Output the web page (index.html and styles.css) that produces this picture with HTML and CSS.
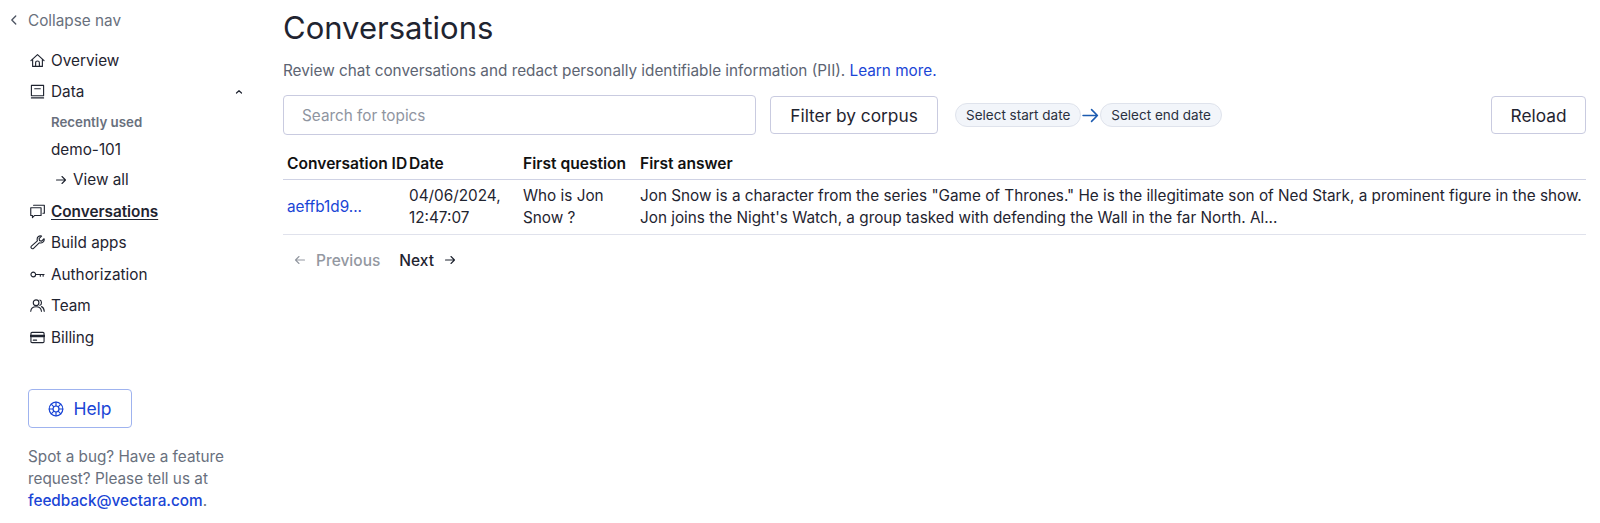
FILE: index.html
```html
<!DOCTYPE html>
<html lang="en">
<head>
<meta charset="utf-8">
<title>Conversations</title>
<link rel="stylesheet" href="styles.css">
</head>
<body>
<div class="app">
  <aside class="sidebar">
    <div class="collapse">
      <svg class="ico-collapse" viewBox="0 0 16 16"><path d="M10 3.500 5.500 8l4.500 4.500"/></svg>
      <span>Collapse nav</span>
    </div>
    <nav class="nav">
      <a class="nav-item"><svg class="ico" viewBox="0 0 16 16"><path d="M1 8.200 8 1.800l7 6.400M2.800 6.800V14.300h10.400V6.800M6 14.300v-3.800a2 2 0 0 1 4 0v3.800"/></svg><span>Overview</span></a>
      <a class="nav-item nav-data"><svg class="ico" viewBox="0 0 16 16"><path d="M1.500 12.500V1.500h13v11zM1.500 14.800h13M5 5h6"/></svg><span class="grow">Data</span><svg class="ico-up" viewBox="0 0 10 10"><path d="M2.500 6 5 3.700 7.500 6"/></svg></a>
      <div class="recent">Recently used</div>
      <div class="corpus">demo-101</div>
      <div class="view-all"><svg class="ico-arrow" viewBox="0 0 12 12"><path d="M1.500 6h9M7 2.500 10.500 6 7 9.500"/></svg><span>View all</span></div>
      <a class="nav-item nav-active"><svg class="ico" viewBox="0 0 16 16"><path d="M.8 4h11v8.200H5L2.600 14.500v-2.300H.8zM3.800 1.300h11.500v8.500h-1.500"/></svg><span>Conversations</span></a>
      <a class="nav-item"><svg class="ico" viewBox="0 0 16 16"><path d="M15 4 12.400 6.500 10.200 6 9.700 3.800 12.300 1.200C10 .4 7.400 2 7.600 4.800c0 .5.100 1 .3 1.400L1.500 11.800c-1.500 1.400.8 3.900 2.300 2.400L9.800 8.300c3 1 6.100-1.300 5.200-4.300z"/></svg><span>Build apps</span></a>
      <a class="nav-item"><svg class="ico" viewBox="0 0 16 16"><circle cx="3.500" cy="8" r="2.500"/><path d="M6 8h9M11 8v1.800M14 8v1.800"/></svg><span>Authorization</span></a>
      <a class="nav-item"><svg class="ico" viewBox="0 0 16 16"><circle cx="6.500" cy="5" r="3"/><path d="M.8 14.200c.6-6.500 10.800-6.500 11.400 0M10.500 2.200c2.300.5 2.300 5 0 5.600M12.300 9.200c1.700.7 2.700 2.700 2.900 5"/></svg><span>Team</span></a>
      <a class="nav-item"><svg class="ico ico-card" viewBox="0 0 16 16"><rect x="1" y="2.500" width="14" height="11" rx="1.200"/><path class="card-band" d="M1 6.300h14"/><path d="M3.500 10.800h3.500"/></svg><span>Billing</span></a>
    </nav>
    <button class="help"><svg class="ico-help" viewBox="0 0 16 16"><circle cx="8" cy="8" r="6.800"/><circle cx="8" cy="8" r="3"/><path d="M3.200 3.200 5.900 5.900M12.800 3.200 10.100 5.900M3.200 12.800 5.900 10.100M12.800 12.800 10.100 10.100M8 1.200V5M8 11v3.800M1.200 8H5M11 8h3.800"/></svg><span>Help</span></button>
    <p class="feedback">Spot a bug? Have a feature request? Please tell us at <a class="link">feedback@vectara.com</a>.</p>
  </aside>
  <main class="main">
    <h1 class="title">Conversations</h1>
    <p class="subtitle">Review chat conversations and redact personally identifiable information (PII). <a class="link-plain">Learn more.</a></p>
    <div class="toolbar">
      <div class="search">Search for topics</div>
      <button class="btn btn-filter">Filter by corpus</button>
      <div class="dates">
        <span class="pill">Select start date</span>
        <svg class="date-arrow" viewBox="0 0 16 16"><path d="M1 8h13.500M9 2.500 14.500 8 9 13.500"/></svg>
        <span class="pill">Select end date</span>
      </div>
      <button class="btn btn-reload">Reload</button>
    </div>
    <table class="table">
      <thead>
        <tr><th class="c-id">Conversation ID</th><th class="c-date">Date</th><th class="c-q">First question</th><th>First answer</th></tr>
      </thead>
      <tbody>
        <tr>
          <td class="c-id"><a class="link-plain">aeffb1d9...</a></td>
          <td class="c-date">04/06/2024, 12:47:07</td>
          <td class="c-q">Who is Jon Snow ?</td>
          <td>Jon Snow is a character from the series "Game of Thrones." He is the illegitimate son of Ned Stark, a prominent figure in the show. Jon joins the Night's Watch, a group tasked with defending the Wall in the far North. Al...</td>
        </tr>
      </tbody>
    </table>
    <div class="pager">
      <span class="page page-off"><svg class="ico-arrow" viewBox="0 0 12 12"><path d="M10.500 6h-9M5 2.500 1.500 6 5 9.500"/></svg><span>Previous</span></span>
      <span class="page"><span>Next</span><svg class="ico-arrow" viewBox="0 0 12 12"><path d="M1.500 6h9M7 2.500 10.500 6 7 9.500"/></svg></span>
    </div>
  </main>
</div>
</body>
</html>
```
FILE: styles.css
```css
* { box-sizing: border-box; }
html, body { margin: 0; padding: 0; background: #fff; }
body { font-family: Inter, "Liberation Sans", sans-serif; color: #1f2430; font-size: 15.300px; }
svg { fill: none; stroke: currentColor; stroke-linecap: round; stroke-linejoin: round; flex: none; display: block; }
.app { display: flex; height: 523px; overflow: hidden; }
.sidebar { width: 283px; flex: none; padding: 10px 0 0 28px; }
.collapse { display: flex; align-items: center; height: 20px; color: #69707d; font-size: 15.300px; margin-left: -21px; gap: 7px; }
.ico-collapse { width: 14px; height: 14px; stroke-width: 1.500; color: #4b5260; }
.nav { margin-top: 14.500px; }
.nav-item { display: flex; align-items: center; gap: 6px; height: 31.500px; font-size: 15.300px; color: #1f2430; width: 214px; margin-left: 2px; }
.ico { width: 15px; height: 15px; stroke-width: 1.200; }
.grow { flex: 1; }
.ico-up { width: 10px; height: 10px; stroke-width: 1.200; }
.card-band { stroke-width: 2.600; }
.recent { font-size: 13.300px; font-weight: 600; color: #69707d; margin: 5px 0 0 23px; height: 18px; line-height: 18px; }
.corpus { font-size: 15.300px; margin: 8px 0 0 23px; height: 22px; line-height: 22px; }
.view-all { display: flex; align-items: center; gap: 6px; margin: 8px 0 5px 27px; height: 22px; font-size: 15.300px; }
.ico-arrow { width: 12px; height: 12px; stroke-width: 1.100; }
.nav-active span { font-weight: 600; text-decoration: underline; text-underline-offset: 2px; }
.help { display: flex; align-items: center; justify-content: center; gap: 9px; width: 104px; height: 39px; margin-top: 36px; background: #fff; border: 1px solid #9fb3ef; border-radius: 4px; color: #1a45d6; font-family: inherit; font-size: 17.500px; font-weight: 400; }
.ico-help { width: 16px; height: 16px; stroke-width: 1.200; }
.feedback { margin: 18px 0 0; width: 210px; font-size: 15.300px; line-height: 22px; color: #69707d; }
.link { color: #1a45d6; font-weight: 500; }
.link-plain { color: #1a45d6; }
.main { flex: 1; min-width: 0; padding: 0 14px 0 0; }
.title { margin: 7px 0 0; font-size: 31px; font-weight: 400; line-height: 42px; color: #1f2430; }
.subtitle { margin: 12px 0 0; font-size: 15.300px; line-height: 20px; color: #5d6472; }
.toolbar { display: flex; align-items: center; margin-top: 14px; height: 40px; }
.search { width: 473px; height: 40px; border: 1px solid #c9cbe0; border-radius: 4px; padding: 0 18px; display: flex; align-items: center; font-size: 15.300px; color: #8f95a1; }
.btn { height: 38px; background: #fff; border: 1px solid #c9cbe0; border-radius: 4px; font-family: inherit; font-size: 17.300px; font-weight: 400; color: #1f2430; padding: 0; }
.btn-filter { margin-left: 14px; width: 168px; }
.dates { display: flex; align-items: center; margin-left: 17px; flex: 1; }
.pill { display: flex; align-items: center; height: 24px; padding: 0 10px; border: 1px solid #dfe3ec; border-radius: 12px; background: #f2f5fa; font-size: 13.500px; color: #2a3040; white-space: nowrap; }
.date-arrow { width: 17px; height: 17px; stroke-width: 1.500; color: #1c5bb0; margin: 0 1px; }
.btn-reload { width: 95px; }
.table { width: 100%; border-collapse: collapse; table-layout: fixed; margin-top: 14px; }
.table th { text-align: left; font-size: 15.600px; font-weight: 600; color: #111; padding: 5px 4px; height: 30px; line-height: 20px; border-bottom: 1px solid #cfd2e4; white-space: nowrap; }
.table td { font-size: 15.300px; line-height: 22px; padding: 5px 4px; vertical-align: middle; border-bottom: 1px solid #e0e2ec; color: #1f2430; }
.c-id { width: 122px; }
.c-date { width: 114px; }
.c-q { width: 117px; }
.pager { display: flex; align-items: center; height: 50px; padding-left: 11px; gap: 19px; font-size: 15.500px; font-weight: 500; }
.page { display: flex; align-items: center; gap: 10px; color: #1f2430; }
.page-off { color: #9398a1; }
```
